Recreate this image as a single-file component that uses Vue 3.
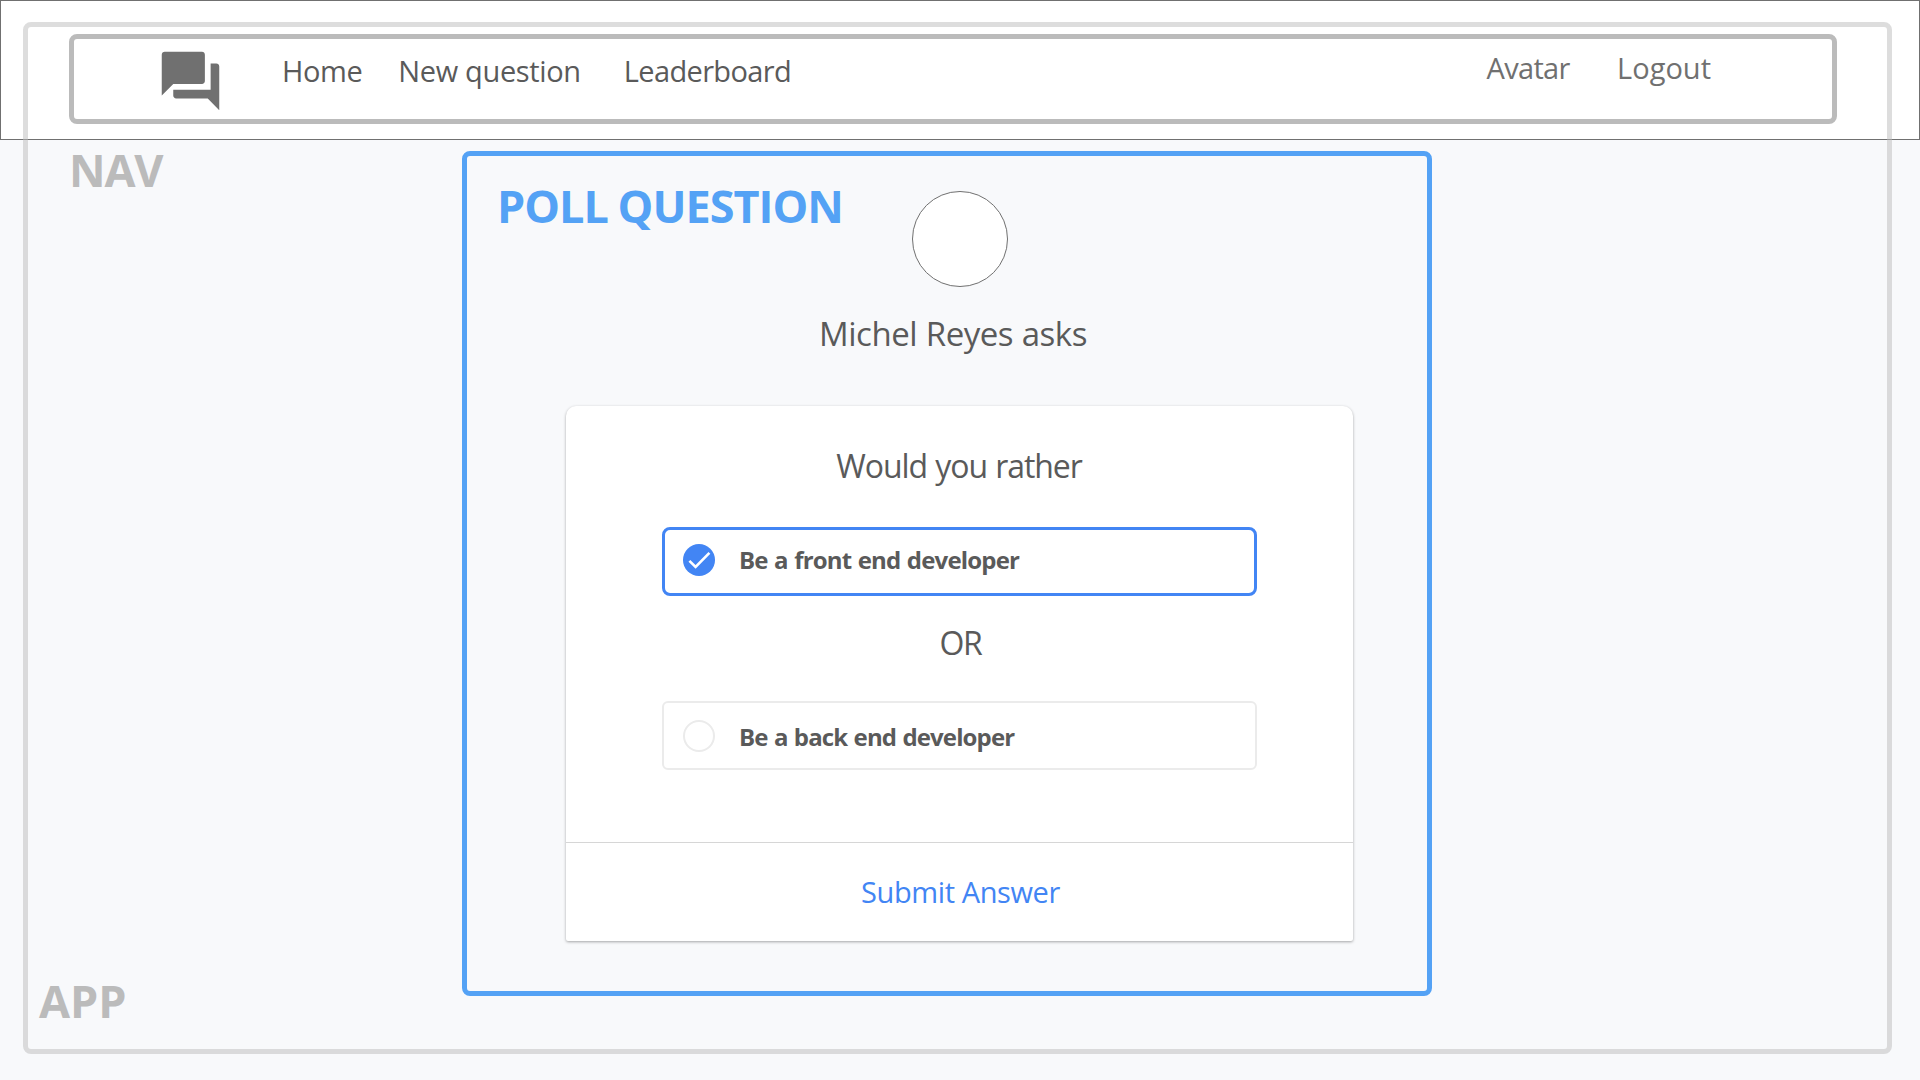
<script setup>
import { ref } from 'vue'

const options = [
  { id: 'front', label: 'Be a front end developer' },
  { id: 'back', label: 'Be a back end developer' },
]
const selected = ref('front')
</script>

<template>
  <div class="page">
    <header class="header">
      <nav class="nav">
        <svg class="logo" viewBox="0 0 24 24" preserveAspectRatio="none" aria-hidden="true">
          <path d="M21 6h-2v9H6v2c0 .55.45 1 1 1h11l4 4V7c0-.55-.45-1-1-1zm-4 6V3c0-.55-.45-1-1-1H3c-.55 0-1 .45-1 1v14l4-4h10c.55 0 1-.45 1-1z" />
        </svg>
        <a class="link home">Home</a>
        <a class="link new">New question</a>
        <a class="link board">Leaderboard</a>
        <div class="account">
          <a class="link avatar-link">Avatar</a>
          <a class="link logout">Logout</a>
        </div>
      </nav>
    </header>

    <main class="poll">
      <div class="content">
        <div class="avatar"></div>
        <h2 class="asker">Michel Reyes asks</h2>
        <section class="card">
          <div class="body">
            <h3 class="prompt">Would you rather</h3>
            <template v-for="(option, i) in options" :key="option.id">
              <div v-if="i" class="or">OR</div>
              <div class="option" :class="{ active: selected === option.id }" @click="selected = option.id">
                <span class="radio">
                  <svg v-if="selected === option.id" viewBox="0 0 32 32"><path d="M6.4 16.8 12.6 23 26.4 8.8" /></svg>
                </span>
                <span class="text" :class="option.id">{{ option.label }}</span>
              </div>
            </template>
          </div>
          <div class="footer"><a class="submit">Submit Answer</a></div>
        </section>
      </div>
      <span class="tag tag-poll">POLL QUESTION</span>
    </main>

    <div class="app-frame"></div>
    <span class="tag tag-nav">NAV</span>
    <span class="tag tag-app">APP</span>
  </div>
</template>

<style>
body {
  margin: 0;
}
</style>

<style scoped>
.page {
  position: relative;
  width: 1920px;
  height: 1080px;
  overflow: hidden;
  background: #f8f9fb;
  font-family: "Segoe UI", "Open Sans", "Noto Sans", sans-serif;
  color: #5a5a5a;
}
.page * {
  box-sizing: border-box;
}
.header {
  height: 140px;
  padding: 33px 82px 0 68px;
  border: 1px solid #707070;
  background: #fff;
}
.nav {
  display: flex;
  align-items: flex-start;
  height: 90px;
  padding: 0 121px 0 82px;
  border: 5px solid #bbb;
  border-radius: 8px;
}
.logo {
  width: 69px;
  height: 70px;
  margin-top: 7px;
  fill: #707070;
  flex: none;
}
.link {
  margin-top: 12px;
  font-size: 29px;
  line-height: 40px;
  white-space: nowrap;
}
.home {
  margin-left: 57px;
  letter-spacing: -0.4px;
}
.new {
  margin-left: 36px;
  letter-spacing: -0.35px;
}
.board {
  margin-left: 43px;
  letter-spacing: -0.65px;
}
.account {
  display: flex;
  margin-left: auto;
  color: #707070;
}
.account .link {
  margin-top: 9px;
}
.avatar-link {
  letter-spacing: -0.7px;
}
.logout {
  margin-left: 47.5px;
}
.poll {
  position: relative;
  width: 970px;
  height: 845px;
  margin: 11px 0 0 462px;
  border: 5px solid #54a2f5;
  border-radius: 8px;
}
.content {
  display: flex;
  flex-direction: column;
  align-items: center;
  width: 787px;
  margin-left: 99px;
  padding-top: 35px;
}
.avatar {
  width: 96px;
  height: 96px;
  border: 1px solid #707070;
  border-radius: 50%;
  background: #fff;
}
.asker {
  margin: 25px 0 50px;
  padding-right: 13px;
  font-size: 33px;
  font-weight: 400;
  line-height: 44px;
  letter-spacing: -0.5px;
  word-spacing: 0.7px;
}
.card {
  width: 787px;
  height: 535px;
  border-radius: 10px 10px 2px 2px;
  background: #fff;
  box-shadow: 0 1px 3px rgba(0, 0, 0, 0.34);
}
.body {
  display: flex;
  flex-direction: column;
  align-items: center;
  height: 437px;
  padding-top: 38px;
  border-bottom: 1px solid #d6d6d6;
}
.prompt {
  margin: 0 0 39px;
  padding-right: 1px;
  font-size: 32px;
  font-weight: 400;
  line-height: 44px;
  letter-spacing: -1.1px;
  word-spacing: 1.2px;
}
.option {
  display: flex;
  align-items: center;
  width: 595px;
  height: 69px;
  padding-left: 19px;
  border: 2px solid #ebebeb;
  border-radius: 6px;
}
.option.active {
  padding-left: 18px;
  border: 3px solid #4285f4;
  border-radius: 8px;
}
.radio {
  width: 32px;
  height: 32px;
  border: 2px solid #ebebeb;
  border-radius: 50%;
}
.active .radio {
  margin-top: -3px;
  border: 0;
  background: #4285f4;
}
.radio svg {
  display: block;
  fill: none;
  stroke: #fff;
  stroke-width: 2.6;
}
.text {
  margin-left: 24px;
  font-size: 24px;
  font-weight: 700;
  line-height: 32px;
  word-spacing: 1px;
}
.front {
  margin-top: -3px;
  letter-spacing: -0.82px;
}
.back {
  margin-top: 2px;
  letter-spacing: -0.88px;
}
.or {
  margin: 25px 0 36px;
  padding-left: 2px;
  font-size: 32px;
  line-height: 44px;
  letter-spacing: -1.2px;
}
.footer {
  padding: 29px 0 0 2px;
  text-align: center;
}
.submit {
  font-size: 29px;
  line-height: 40px;
  letter-spacing: -0.4px;
  color: #4285f4;
}
.app-frame {
  position: absolute;
  left: 23px;
  top: 22px;
  width: 1869px;
  height: 1032px;
  border: 5px solid rgba(187, 187, 187, 0.5);
  border-radius: 8px;
  pointer-events: none;
}
.tag {
  position: absolute;
  font-size: 45px;
  font-weight: 700;
  line-height: 60px;
  color: #bbb;
  white-space: nowrap;
}
.tag-nav {
  left: 69px;
  top: 140px;
  letter-spacing: -1.2px;
}
.tag-app {
  left: 39px;
  top: 971px;
}
.tag-poll {
  left: 30px;
  top: 20px;
  letter-spacing: -1px;
  word-spacing: -1px;
  color: #54a2f5;
}
</style>
